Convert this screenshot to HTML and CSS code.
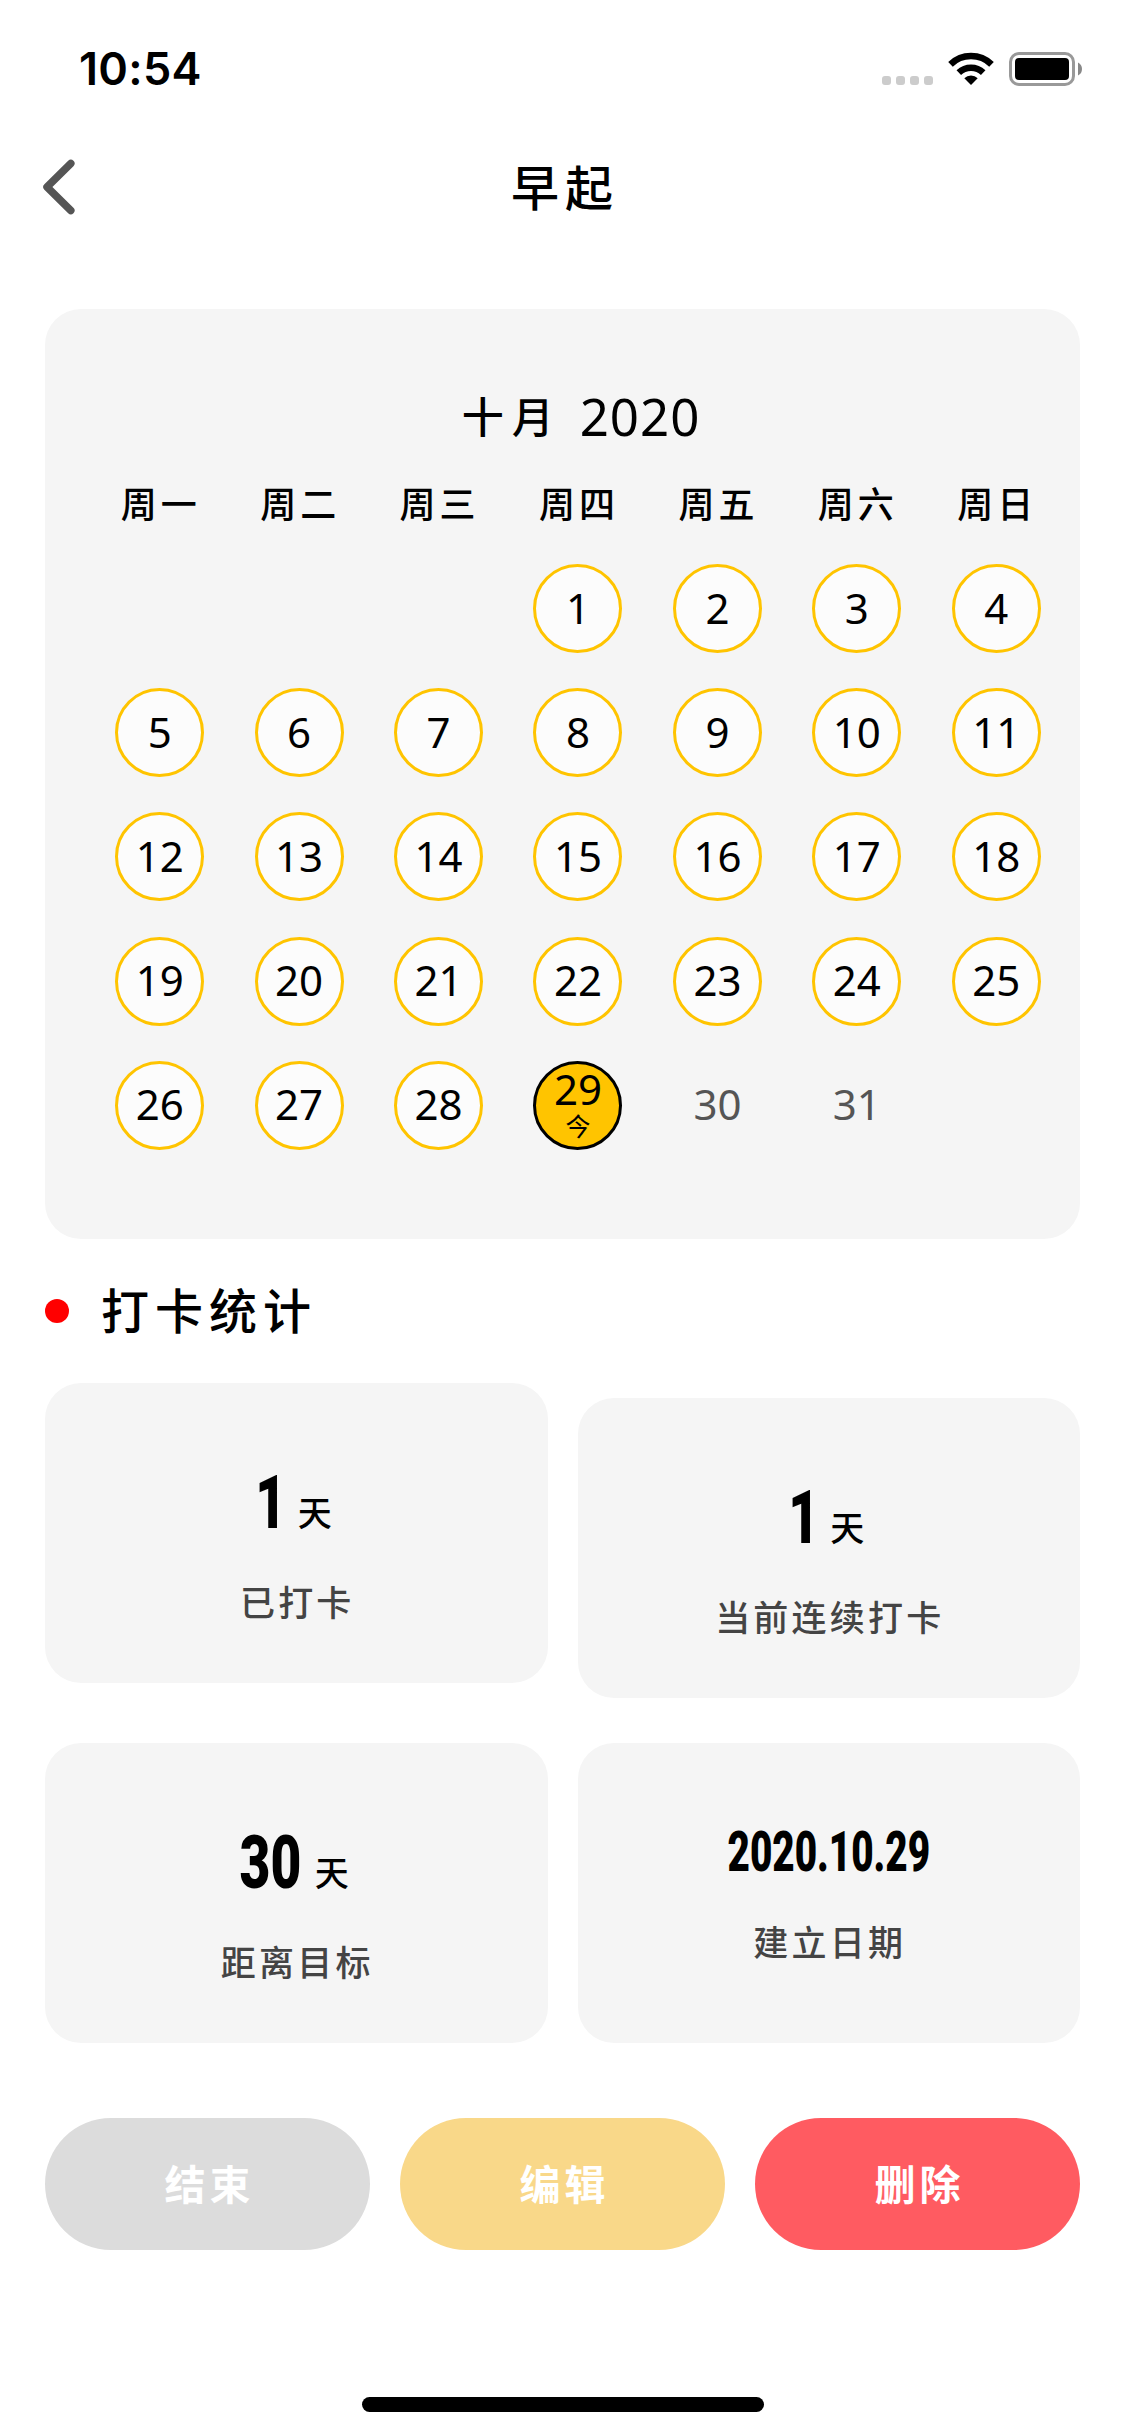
FILE: index.html
```
<!DOCTYPE html>
<html lang="zh-CN">
<head>
<meta charset="utf-8">
<title>早起</title>
<link rel="stylesheet" href="styles.css">
</head>
<body>
<div class="status">
  <span class="time">10:54</span>
  <svg class="status-icons" width="202" height="36" viewBox="882 51 202 36">
    <g fill="#ccc">
      <rect x="882" y="76" width="9" height="9" rx="3"/>
      <rect x="896" y="76" width="9" height="9" rx="3"/>
      <rect x="910" y="76" width="9" height="9" rx="3"/>
      <rect x="924" y="76" width="9" height="9" rx="3"/>
    </g>
    <g fill="none" stroke="#000" stroke-width="6.6">
      <path d="M950.5 64.3A29.5 29.5 0 0 1 991.5 64.3"/>
      <path d="M958.8 72.6A17.8 17.8 0 0 1 983.2 72.6"/>
    </g>
    <path d="M971 85L964.3 78.3A9.5 9.5 0 0 1 977.7 78.3Z"/>
    <rect x="1010.5" y="53.5" width="63" height="31" rx="8.5" fill="none" stroke="#999" stroke-width="3"/>
    <rect x="1015" y="58" width="54" height="22" rx="4"/>
    <path d="M1078 62.5Q1082 64.500 1082 69T1078 75.500Z" fill="#888"/>
  </svg>
</div>

<header class="header">
  <svg class="back" width="40" height="60" viewBox="0 0 40 60" fill="none" stroke="#555" stroke-width="7.500" stroke-linecap="round" stroke-linejoin="round"><path d="M33.800 6.500L10 30L33.800 53.500"/></svg>
  <h1 class="title">早起</h1>
</header>

<main class="main">
  <section class="calendar">
    <h2 class="month"><span>十月</span><span class="year">2020</span></h2>
    <div class="grid weekdays"><span>周一</span><span>周二</span><span>周三</span><span>周四</span><span>周五</span><span>周六</span><span>周日</span></div>
    <div class="grid days">
      <span class="day first">1</span><span class="day">2</span><span class="day">3</span><span class="day">4</span>
      <span class="day">5</span><span class="day">6</span><span class="day">7</span><span class="day">8</span><span class="day">9</span><span class="day">10</span><span class="day">11</span>
      <span class="day">12</span><span class="day">13</span><span class="day">14</span><span class="day">15</span><span class="day">16</span><span class="day">17</span><span class="day">18</span>
      <span class="day">19</span><span class="day">20</span><span class="day">21</span><span class="day">22</span><span class="day">23</span><span class="day">24</span><span class="day">25</span>
      <span class="day">26</span><span class="day">27</span><span class="day">28</span><span class="day today">29<small>今</small></span><span class="day future">30</span><span class="day future">31</span>
    </div>
  </section>

  <div class="section-head"><i class="dot"></i><h2 class="section-title">打卡统计</h2></div>

  <section class="stats">
    <div class="stat">
      <div class="value"><span class="num one"><b>1</b></span><span class="unit">天</span></div>
      <div class="label">已打卡</div>
    </div>
    <div class="stat lowered">
      <div class="value"><span class="num one"><b>1</b></span><span class="unit">天</span></div>
      <div class="label">当前连续打卡</div>
    </div>
    <div class="stat">
      <div class="value"><span class="num two"><b>30</b></span><span class="unit">天</span></div>
      <div class="label">距离目标</div>
    </div>
    <div class="stat dated">
      <div class="value"><span class="num date"><b>2020.10.29</b></span></div>
      <div class="label">建立日期</div>
    </div>
  </section>

  <div class="actions">
    <button class="btn end">结束</button>
    <button class="btn edit">编辑</button>
    <button class="btn delete">删除</button>
  </div>
</main>
<div class="home"></div>
</body>
</html>
```
FILE: styles.css
```
* { box-sizing: border-box; margin: 0; }
body {
  width: 1125px;
  height: 2436px;
  background: #fff;
  color: #000;
  font-family: "Noto Sans CJK SC", sans-serif;
  display: flex;
  flex-direction: column;
  overflow: hidden;
}
.status {
  height: 132px;
  padding: 6px 41px 0 79px;
  display: flex;
  align-items: center;
  justify-content: space-between;
}
.time { font: 600 45px/54px Inter, sans-serif; letter-spacing: .3px; }
.header {
  height: 106px;
  padding: 0 37px;
  display: grid;
  grid-template-columns: 40px 1fr 40px;
  align-items: center;
}
.back { margin-top: 4px; }
.title {
  font-size: 48px;
  line-height: 60px;
  font-weight: 500;
  letter-spacing: 6px;
  text-indent: 5px;
  text-align: center;
}
.main { margin-top: 71px; padding: 0 45px; }
.calendar {
  height: 930px;
  padding: 76px 14px 0 45px;
  background: #f5f5f5;
  border-radius: 36px;
}
.month {
  height: 60px;
  padding-left: 6px;
  display: flex;
  justify-content: center;
  align-items: flex-start;
  gap: 18px;
  font-size: 42px;
  line-height: 60px;
  font-weight: 500;
  letter-spacing: 8px;
}
.year { padding-top: 1px; font: 400 51px/60px "Noto Sans", sans-serif; letter-spacing: 1px; }
.grid { display: grid; grid-template-columns: repeat(7, 1fr); justify-items: center; }
.weekdays {
  margin-top: 32px;
  font-size: 36px;
  line-height: 50px;
  font-weight: 500;
  letter-spacing: 4px;
  text-indent: 2px;
}
.days { margin-top: 37px; grid-auto-rows: 124.2px; }
.day {
  width: 89px;
  height: 89px;
  padding-bottom: 2px;
  border: 3px solid #ffc400;
  border-radius: 50%;
  background: #fcfcfc;
  display: flex;
  flex-direction: column;
  align-items: center;
  justify-content: center;
  font: 400 42px/44px "Noto Sans", "Noto Sans CJK SC", sans-serif;
}
.first { grid-column: 4; }
.today { padding: 0; background: #ffc400; border-color: #000; line-height: 42px; }
.today small { font-size: 25px; line-height: 32px; }
.future { background: none; border-color: transparent; color: #555; }

.section-head { height: 144px; display: flex; align-items: center; gap: 32px; }
.dot { width: 24px; height: 24px; border-radius: 50%; background: #f00; }
.section-title {
  padding-bottom: 6px;
  font-size: 48px;
  line-height: 60px;
  font-weight: 500;
  letter-spacing: 6px;
}
.stats { display: grid; grid-template-columns: 1fr 1fr; gap: 60px 30px; }
.stat {
  height: 300px;
  padding-top: 89px;
  border-radius: 36px;
  background: #f5f5f5;
}
.lowered { margin: 15px 0 -15px; }
.value { height: 60px; display: flex; justify-content: center; align-items: baseline; }
.num {
  display: flex;
  justify-content: center;
  font: 700 75px/60px Roboto, sans-serif;
}
.num b { transform: scaleX(.71); }
.one { width: 28px; }
.two { width: 62px; }
.date { width: 202px; font-size: 56px; }
.date b { transform: scaleX(.69); }
.unit { margin: 0 4px 3px 13px; align-self: flex-end; font-size: 34px; line-height: 34px; font-weight: 500; }
.label {
  margin-top: 49px;
  font-size: 35px;
  line-height: 40px;
  font-weight: 500;
  letter-spacing: 3.2px;
  text-indent: 2px;
  text-align: center;
  color: #444;
}
.dated { padding-top: 79px; }
.dated .label { margin-top: 39px; }

.actions { margin-top: 75px; display: grid; grid-template-columns: repeat(3, 1fr); gap: 30px; }
.btn {
  height: 132px;
  padding: 0 0 4px;
  border: 0;
  border-radius: 66px;
  color: #fff;
  font: 700 41px/60px "Noto Sans CJK SC", sans-serif;
  letter-spacing: 4px;
  text-indent: 4px;
}
.end { background: #dcdcdc; }
.edit { background: #f9d889; }
.delete { background: #ff5b61; }
.home {
  width: 402px;
  height: 15px;
  margin: auto auto 24px;
  border-radius: 8px;
  background: #000;
}
```
